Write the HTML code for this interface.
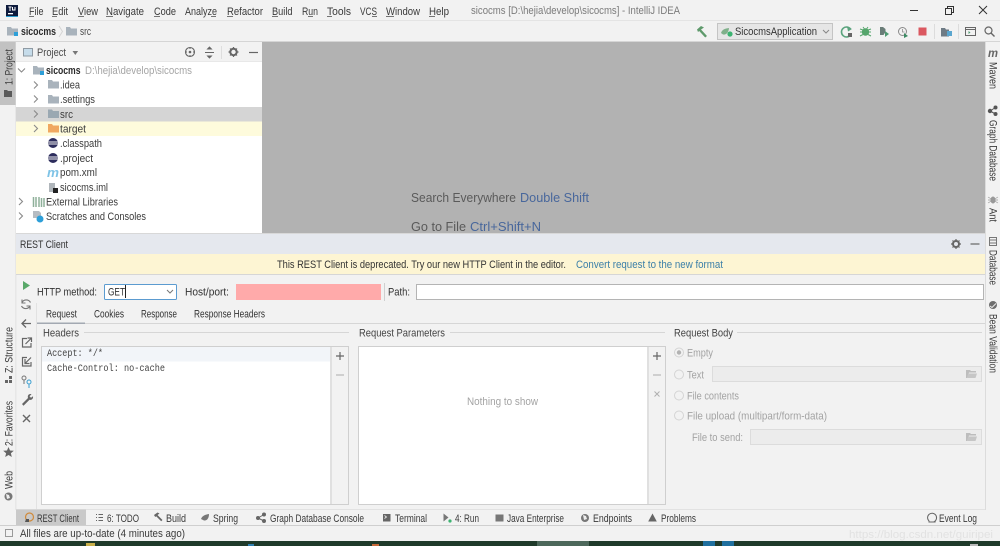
<!DOCTYPE html>
<html><head><meta charset="utf-8"><title>sicocms - IntelliJ IDEA</title>
<style>
html,body{margin:0;padding:0;width:1000px;height:546px;overflow:hidden;background:#f2f2f2}
svg{display:block;font-family:"Liberation Sans",sans-serif;font-size:11px;fill:#3c3c3c;filter:blur(.3px)}
.m{font-family:"Liberation Mono",monospace;font-size:10px;fill:#444}
.g{fill:#a3a3a3}
.b{font-weight:bold;fill:#2a2a2a}
</style></head><body>
<svg width="1000" height="546" viewBox="0 0 1000 546">
<defs>
<g id="fo"><path d="M0 1h4l1 1.500h6v7H0z"/></g>
<g id="arr"><path d="M-2-3.500 1.500 0-2 3.500" fill="none" stroke="#8a8a8a" stroke-width="1.100"/></g>
<g id="ecl"><circle r="5" fill="#2c2c5c"/><path d="M-5-1h10M-5 1h10" stroke="#f2f2f2" stroke-width="1"/></g>
<g id="dfo"><path d="M0 1h4l1 1h5v1.500H3L1 9H0z" fill="#bdbdbd"/><path d="M2.500 4.500H11L9.500 9H1z" fill="#c6c6c6"/></g>
</defs>
<rect width="1000" height="546" fill="#f2f2f2"/>
<!-- title -->
<rect y="20" width="1000" height="1" fill="#e4e4e4"/>
<rect x="6" y="5" width="12" height="12" fill="#0d1a3c"/><rect x="8" y="13" width="5" height="1.300" fill="#fff"/><path d="M8.500 7h3M10 7v4M12.500 7v3h2.500V7" stroke="#fff" stroke-width="1" fill="none"/><rect x="6" y="16" width="12" height="1" fill="#2e9fd0"/>
<g fill="#3a3a3a">
<text x="29" y="15" textLength="14.500" lengthAdjust="spacingAndGlyphs">File</text>
<text x="52" y="15" textLength="16" lengthAdjust="spacingAndGlyphs">Edit</text>
<text x="78" y="15" textLength="20" lengthAdjust="spacingAndGlyphs">View</text>
<text x="106" y="15" textLength="38" lengthAdjust="spacingAndGlyphs">Navigate</text>
<text x="154" y="15" textLength="22" lengthAdjust="spacingAndGlyphs">Code</text>
<text x="185" y="15" textLength="32" lengthAdjust="spacingAndGlyphs">Analyze</text>
<text x="227" y="15" textLength="36" lengthAdjust="spacingAndGlyphs">Refactor</text>
<text x="272" y="15" textLength="20.500" lengthAdjust="spacingAndGlyphs">Build</text>
<text x="302" y="15" textLength="16" lengthAdjust="spacingAndGlyphs">Run</text>
<text x="327" y="15" textLength="24" lengthAdjust="spacingAndGlyphs">Tools</text>
<text x="360" y="15" textLength="17" lengthAdjust="spacingAndGlyphs">VCS</text>
<text x="386" y="15" textLength="34" lengthAdjust="spacingAndGlyphs">Window</text>
<text x="429" y="15" textLength="20" lengthAdjust="spacingAndGlyphs">Help</text>
</g>
<g fill="#555"><rect x="29" y="16" width="5" height=".8"/><rect x="52" y="16" width="5" height=".8"/><rect x="78" y="16" width="6" height=".8"/><rect x="106" y="16" width="7" height=".8"/><rect x="154" y="16" width="6" height=".8"/><rect x="211" y="16" width="5" height=".8"/><rect x="227" y="16" width="6" height=".8"/><rect x="272" y="16" width="6" height=".8"/><rect x="308" y="16" width="5" height=".8"/><rect x="327" y="16" width="5" height=".8"/><rect x="372" y="16" width="5" height=".8"/><rect x="386" y="16" width="8" height=".8"/><rect x="429" y="16" width="6" height=".8"/></g>
<text x="471" y="14" textLength="209" lengthAdjust="spacingAndGlyphs" fill="#7b7b7b">sicocms [D:\hejia\develop\sicocms] - IntelliJ IDEA</text>
<path d="M910 10.500h8" stroke="#333" stroke-width="1"/>
<path d="M945.500 8.500h6v6h-6zM947.500 8.500v-2h6v6h-2" fill="none" stroke="#333" stroke-width="1"/>
<path d="M979 6l8 8M987 6l-8 8" stroke="#333" stroke-width="1"/>
<!-- nav -->
<rect y="41" width="1000" height="1" fill="#d5d5d5"/>
<use href="#fo" x="7" y="26" fill="#a9b3bc"/><rect x="14" y="32" width="4" height="4" fill="#2d9fd8"/>
<text x="21" y="35" textLength="35" lengthAdjust="spacingAndGlyphs" class="b">sicocms</text>
<path d="M59 26l3.500 5.500L59 37" fill="none" stroke="#d4d4d4"/>
<use href="#fo" x="66" y="26" fill="#a9b3bc"/>
<text x="80" y="35" textLength="11" lengthAdjust="spacingAndGlyphs" fill="#4a4a4a">src</text>
<!-- hammer -->
<path d="M697 29.500l4-3.500 3 1.500-3 2 6 6.500-1.800 1.500-6-6.500-1.200 1z" fill="#5f9a6c"/>
<!-- run config combo -->
<rect x="717.500" y="23.500" width="115" height="16" fill="#e6e6e6" stroke="#c4c4c4"/>
<path d="M721 33c1-3.500 4-4.500 8-5-.5 5-3 7-6 6.500z" fill="#7fb08a"/><circle cx="730" cy="34" r="2.600" fill="#3cb371"/>
<text x="735" y="35" textLength="82" lengthAdjust="spacingAndGlyphs" fill="#333">SicocmsApplication</text>
<path d="M823 30l3 3 3-3" fill="none" stroke="#888"/>
<!-- run toolbar -->
<path d="M850.500 29a5 5 0 1 0 0 6" fill="none" stroke="#5aa37d" stroke-width="1.600"/><path d="M847 26.500l5 2.500-4 2.500z" fill="#5aa37d"/><rect x="848" y="33" width="4" height="4" fill="#666"/>
<circle cx="865.500" cy="32" r="3.700" fill="#55a56c"/><path d="M860 29l3 1M871 29l-3 1M860 32h3M871 32h-3M860 36l3-1.500M871 36l-3-1.500M863 27l1.500 2M868 27l-1.500 2" stroke="#55a56c"/>
<path d="M880 27h3l2.500 2v3l-2 3h-3.500z" fill="#6a7d78"/><path d="M885 31l4 3-4 3z" fill="#4f9a72"/>
<circle cx="902.500" cy="31.500" r="4" fill="none" stroke="#8a8a8a" stroke-width="1"/><path d="M902.500 29v3h2" fill="none" stroke="#8a8a8a" stroke-width=".8"/><path d="M904 33l4 3-4 2z" fill="#3b8a63"/>
<rect x="918.500" y="27.500" width="8" height="8" fill="#db5860"/>
<rect x="934" y="24" width="1" height="15" fill="#dcdcdc"/>
<path d="M941 28h4l1 1.500h3v7h-8z" fill="#6e7b85"/><rect x="947" y="31" width="5" height="5" fill="#5aa6cf"/>
<rect x="958" y="24" width="1" height="15" fill="#dcdcdc"/>
<rect x="965.500" y="27.500" width="10" height="8" fill="none" stroke="#666"/><path d="M965 29.500h11" stroke="#666"/><path d="M968.500 31l2 1.500-2 1.500z" fill="#4f9a72"/>
<circle cx="988.500" cy="30.500" r="3.500" fill="none" stroke="#666" stroke-width="1.200"/><path d="M991 33l3.500 3.500" stroke="#666" stroke-width="1.400"/>
<!-- left stripe -->
<rect x="0" y="42" width="16" height="63" fill="#c2c2c2"/>
<rect x="15.500" y="42" width=".8" height="468" fill="#dcdcdc"/>
<text transform="translate(12.500 85) rotate(-90)" textLength="36" lengthAdjust="spacingAndGlyphs" fill="#3a3a3a">1: Project</text>
<path d="M4 90h3l1 1h4v6H4z" fill="#5a5a5a"/>
<text transform="translate(12.500 373) rotate(-90)" textLength="46" lengthAdjust="spacingAndGlyphs" fill="#3a3a3a">Z: Structure</text>
<path d="M5 380h3v3H5zM9 380h3v3H9zM9 376h3v3H9z" fill="#666"/>
<text transform="translate(12.500 446) rotate(-90)" textLength="45" lengthAdjust="spacingAndGlyphs" fill="#3a3a3a">2: Favorites</text>
<path d="M8.500 447l1.500 3.500 3.800.3-2.900 2.500.9 3.700-3.300-2-3.300 2 .9-3.700-2.900-2.500 3.800-.3z" fill="#666"/>
<text transform="translate(12.500 489) rotate(-90)" textLength="18" lengthAdjust="spacingAndGlyphs" fill="#3a3a3a">Web</text>
<circle cx="8.500" cy="496.500" r="4" fill="#777"/><path d="M6 494l3 1 1 3-3 1z" fill="#eee"/>
<!-- right stripe -->
<rect x="985" y="42" width="1" height="468" fill="#dcdcdc"/>
<text x="988" y="57" font-style="italic" font-weight="bold" font-size="12" textLength="10" lengthAdjust="spacingAndGlyphs" fill="#666">m</text>
<text transform="translate(989.500 62) rotate(90)" textLength="27" lengthAdjust="spacingAndGlyphs" fill="#3a3a3a">Maven</text>
<circle cx="990" cy="111" r="2.200" fill="#555"/><circle cx="995.500" cy="107.500" r="2" fill="#555"/><circle cx="995.500" cy="114" r="2" fill="#555"/><path d="M990 111l5.500-3.500M990 111l5.500 3" stroke="#555"/>
<text transform="translate(989.500 120) rotate(90)" textLength="61" lengthAdjust="spacingAndGlyphs" fill="#3a3a3a">Graph Database</text>
<ellipse cx="993" cy="200" rx="2.500" ry="3.500" fill="#999"/><path d="M988 197l10 6M998 197l-10 6M988 200h10" stroke="#999" stroke-width=".7"/>
<text transform="translate(989.500 208) rotate(90)" textLength="14" lengthAdjust="spacingAndGlyphs" fill="#3a3a3a">Ant</text>
<path d="M989.500 237.500h7v8h-7zM989.500 240h7M989.500 243h7" fill="none" stroke="#777"/>
<text transform="translate(989.500 250) rotate(90)" textLength="35" lengthAdjust="spacingAndGlyphs" fill="#3a3a3a">Database</text>
<circle cx="993" cy="305" r="4" fill="#6e6e6e"/><path d="M990 306l2 1.500 4-4" fill="none" stroke="#eee"/>
<text transform="translate(989.500 314) rotate(90)" textLength="59" lengthAdjust="spacingAndGlyphs" fill="#3a3a3a">Bean Validation</text>
<!-- project header -->
<rect x="16" y="42" width="246" height="20" fill="#f2f2f2"/>
<rect x="16" y="61" width="246" height="1" fill="#e8e8e8"/>
<rect x="23.500" y="48.500" width="9" height="7.500" fill="#c6dcea" stroke="#8f9aa3"/>
<text x="37" y="56" textLength="29" lengthAdjust="spacingAndGlyphs" fill="#4a4a4a">Project</text>
<path d="M72.500 51l2.800 4 2.800-4z" fill="#777"/>
<circle cx="190" cy="52" r="4.500" fill="none" stroke="#666" stroke-width="1.100"/><circle cx="190" cy="52" r="1.300" fill="#666"/><path d="M190 47v2M190 55v2M185 52h2M193 52h2" stroke="#666"/>
<path d="M205 52.500h9M209.500 47l-2 2h4zM209.500 58l-2-2h4z" stroke="#666" fill="#666" stroke-width=".9"/>
<rect x="221" y="46" width="1" height="13" fill="#dedede"/>
<circle cx="233.500" cy="52" r="3.200" fill="none" stroke="#666" stroke-width="2"/><path d="M233.500 47v2M233.500 55v2M228.500 52h2M236.500 52h2M230 48.500l1.500 1.500M237 48.500L235.500 50M230 55.500l1.500-1.500M237 55.500L235.500 54" stroke="#666" stroke-width="1.200"/>
<path d="M249 52.500h9" stroke="#666" stroke-width="1.200"/>
<!-- tree -->
<rect x="16" y="62" width="246" height="171" fill="#fff"/>
<rect x="16" y="107" width="246" height="14.500" fill="#d5d5d5"/>
<rect x="16" y="121.500" width="246" height="14.500" fill="#fefbdc"/>
<path d="M18 68.500l3.500 3.500 3.500-3.500" fill="none" stroke="#8a8a8a" stroke-width="1.100"/>
<use href="#fo" x="33" y="65" fill="#a9b3bc"/><rect x="40" y="71" width="4" height="4" fill="#2d9fd8"/>
<text x="46" y="74" textLength="34.500" lengthAdjust="spacingAndGlyphs" class="b">sicocms</text>
<text x="85" y="74" textLength="107" lengthAdjust="spacingAndGlyphs" fill="#a5a5a5">D:\hejia\develop\sicocms</text>
<use href="#arr" x="36" y="85"/><use href="#fo" x="48" y="79" fill="#a9b3bc"/><text x="60" y="88.500" textLength="20" lengthAdjust="spacingAndGlyphs">.idea</text>
<use href="#arr" x="36" y="99"/><use href="#fo" x="48" y="94" fill="#a9b3bc"/><text x="60" y="103" textLength="35" lengthAdjust="spacingAndGlyphs">.settings</text>
<use href="#arr" x="36" y="114"/><use href="#fo" x="48" y="108.500" fill="#9aa8b2"/><text x="60" y="118" textLength="13" lengthAdjust="spacingAndGlyphs">src</text>
<use href="#arr" x="36" y="128.500"/><use href="#fo" x="48" y="123" fill="#f0a860"/><text x="60" y="132.500" textLength="26" lengthAdjust="spacingAndGlyphs">target</text>
<use href="#ecl" x="53" y="143"/><text x="60" y="147" textLength="42" lengthAdjust="spacingAndGlyphs">.classpath</text>
<use href="#ecl" x="53" y="158"/><text x="60" y="162" textLength="33" lengthAdjust="spacingAndGlyphs">.project</text>
<text x="47" y="177" font-style="italic" font-weight="bold" font-size="13" textLength="12" lengthAdjust="spacingAndGlyphs" fill="#7ec3e6">m</text><text x="60" y="176" textLength="37" lengthAdjust="spacingAndGlyphs">pom.xml</text>
<rect x="49" y="183" width="6" height="9" fill="#b0b6bb"/><rect x="53" y="188" width="5" height="5" fill="#222"/><text x="60" y="191" textLength="48" lengthAdjust="spacingAndGlyphs">sicocms.iml</text>
<use href="#arr" x="21" y="201.500"/><path d="M33.500 197v10M36 197v10M39 197v10M41.500 198v9M44 198v9" stroke="#8fb09a" stroke-width="1.500"/><text x="46" y="205.500" textLength="72" lengthAdjust="spacingAndGlyphs">External Libraries</text>
<use href="#arr" x="21" y="216"/><path d="M33 211h6l2 2v5h-8z" fill="#b6bcc2"/><circle cx="40" cy="219" r="3.500" fill="#2d9fd8"/><text x="46" y="220" textLength="100" lengthAdjust="spacingAndGlyphs">Scratches and Consoles</text>
<!-- editor -->
<rect x="262" y="42" width="723" height="192" fill="#b2b2b2"/>
<text x="411" y="202" font-size="13" textLength="105" lengthAdjust="spacingAndGlyphs" fill="#5a5a5a">Search Everywhere</text>
<text x="520" y="202" font-size="13" textLength="69" lengthAdjust="spacingAndGlyphs" fill="#48679c">Double Shift</text>
<text x="411" y="231" font-size="13" textLength="55" lengthAdjust="spacingAndGlyphs" fill="#5a5a5a">Go to File</text>
<text x="470" y="231" font-size="13" textLength="71" lengthAdjust="spacingAndGlyphs" fill="#48679c">Ctrl+Shift+N</text>
<!-- REST header -->
<rect x="16" y="233" width="969" height="1" fill="#d8d8d8"/>
<rect x="16" y="234" width="969" height="20" fill="#e5e8ee"/>
<text x="20" y="248" textLength="48" lengthAdjust="spacingAndGlyphs" fill="#333">REST Client</text>
<circle cx="956" cy="244" r="3" fill="none" stroke="#666" stroke-width="2"/><path d="M956 239v2M956 247v2M951 244h2M959 244h2M952.500 240.500l1.500 1.500M959.500 240.500L958 242M952.500 247.500l1.500-1.500M959.500 247.500L958 246" stroke="#666" stroke-width="1.200"/>
<path d="M970.500 244h9" stroke="#666" stroke-width="1.200"/>
<!-- banner -->
<rect x="16" y="254" width="969" height="20" fill="#fdf5d3"/>
<rect x="16" y="274" width="969" height="1" fill="#d6d6d6"/>
<text x="277" y="268" textLength="289" lengthAdjust="spacingAndGlyphs" fill="#333">This REST Client is deprecated. Try our new HTTP Client in the editor.</text>
<text x="576" y="268" textLength="147" lengthAdjust="spacingAndGlyphs" fill="#3b7fa8">Convert request to the new format</text>
<!-- left tools -->
<path d="M23 281v9l7-4.500z" fill="#59a869"/>
<path d="M30.500 302.500a4.800 4.800 0 0 0-8.500 0M21.500 306a4.800 4.800 0 0 0 8.500 0" fill="none" stroke="#777" stroke-width="1.200"/><path d="M22 299.500v3.500h3.500M30 309.500V306h-3.500" fill="none" stroke="#777" stroke-width="1.100"/>
<path d="M31 323.500H22M26 319.500l-4 4 4 4" fill="none" stroke="#666" stroke-width="1.300"/>
<path d="M27 338.500h-4.500v8.500H31v-4M25.500 344l5.500-5.500M27.500 338h4v4" fill="none" stroke="#666" stroke-width="1.200"/>
<path d="M27 357.500h-4.500v8.500H31v-4M31 357.500L25.500 363M25 359v4.500h4.500" fill="none" stroke="#666" stroke-width="1.200"/>
<circle cx="24" cy="378" r="2" fill="none" stroke="#777"/><path d="M24 380v4" stroke="#777"/><circle cx="29" cy="382" r="2" fill="none" stroke="#3a9fd0"/><path d="M29 384v4" stroke="#3a9fd0"/>
<path d="M22 404l6-6c-.8-2.500 1-4.500 3.500-3.800l-2 2 1.500 1.500 2-1.500c.5 2.500-1.500 4.200-3.500 3.500l-6 6z" fill="#666"/>
<path d="M23 415l7 7M30 415l-7 7" stroke="#666" stroke-width="1.400"/>
<!-- row -->
<text x="37" y="295.500" textLength="60" lengthAdjust="spacingAndGlyphs" fill="#333">HTTP method:</text>
<rect x="104.500" y="284.500" width="72" height="15" rx="1" fill="#fff" stroke="#5b9bd0"/>
<text x="108" y="295.500" textLength="17" lengthAdjust="spacingAndGlyphs" fill="#333">GET</text><rect x="125" y="285" width="1" height="13" fill="#222"/>
<path d="M167 290l3 3 3-3" fill="none" stroke="#777"/>
<text x="185" y="295.500" textLength="44" lengthAdjust="spacingAndGlyphs" fill="#333">Host/port:</text>
<rect x="236" y="284" width="145" height="16" fill="#ffaaaa"/>
<rect x="384" y="283" width="1" height="18" fill="#cfcfcf"/>
<text x="388" y="295.500" textLength="22" lengthAdjust="spacingAndGlyphs" fill="#333">Path:</text>
<rect x="416.500" y="284.500" width="567" height="15" fill="#fff" stroke="#b4b4b4"/>
<!-- tabs -->
<rect x="37" y="323" width="948" height="1" fill="#d6d6d6"/>
<rect x="37" y="322.500" width="48" height="1.500" fill="#a3a9b2"/>
<rect x="36" y="303" width="1" height="207" fill="#e2e2e2"/>
<text x="46" y="317.500" textLength="31" lengthAdjust="spacingAndGlyphs" fill="#333">Request</text>
<text x="94" y="317.500" textLength="30" lengthAdjust="spacingAndGlyphs" fill="#333">Cookies</text>
<text x="141" y="317.500" textLength="36" lengthAdjust="spacingAndGlyphs" fill="#333">Response</text>
<text x="194" y="317.500" textLength="71" lengthAdjust="spacingAndGlyphs" fill="#333">Response Headers</text>
<!-- group titles -->
<text x="43" y="336.500" textLength="36" lengthAdjust="spacingAndGlyphs" fill="#444">Headers</text><rect x="84" y="332" width="265" height="1" fill="#d6d6d6"/>
<text x="359" y="336.500" textLength="86" lengthAdjust="spacingAndGlyphs" fill="#444">Request Parameters</text><rect x="450" y="332" width="215" height="1" fill="#d6d6d6"/>
<text x="674" y="336.500" textLength="59" lengthAdjust="spacingAndGlyphs" fill="#444">Request Body</text><rect x="737" y="332" width="245" height="1" fill="#d6d6d6"/>
<!-- header table -->
<rect x="41.500" y="346.500" width="307" height="158" fill="#f2f2f2" stroke="#cfcfcf"/>
<rect x="42" y="347" width="288" height="157" fill="#fff"/><rect x="330.500" y="347" width="1" height="157" fill="#cfcfcf"/>
<rect x="42" y="347" width="288" height="14.500" fill="#f2f5f9"/>
<text x="47" y="356" class="m" textLength="56" lengthAdjust="spacingAndGlyphs">Accept: */*</text>
<text x="47" y="371" class="m" textLength="118" lengthAdjust="spacingAndGlyphs">Cache-Control: no-cache</text>
<path d="M340 352v8M336 356h8" stroke="#666" stroke-width="1.200"/><path d="M336 375h8" stroke="#b8b8b8" stroke-width="1.200"/>
<!-- params table -->
<rect x="358.500" y="346.500" width="307" height="158" fill="#f2f2f2" stroke="#cfcfcf"/>
<rect x="359" y="347" width="288" height="157" fill="#fff"/><rect x="647.500" y="347" width="1" height="157" fill="#cfcfcf"/>
<text x="467" y="405" textLength="71" lengthAdjust="spacingAndGlyphs" fill="#a3a3a3">Nothing to show</text>
<path d="M657 352v8M653 356h8" stroke="#666" stroke-width="1.200"/><path d="M653 375h8" stroke="#b8b8b8" stroke-width="1.200"/><path d="M654.500 391.500l5 5M659.500 391.500l-5 5" stroke="#b0b0b0" stroke-width="1"/>
<!-- body -->
<g fill="#f2f2f2" stroke="#d4d4d4"><circle cx="679" cy="352.500" r="4.500"/><circle cx="679" cy="374.500" r="4.500"/><circle cx="679" cy="395.500" r="4.500"/><circle cx="679" cy="415.500" r="4.500"/></g>
<circle cx="679" cy="352.500" r="2.200" fill="#b2b2b2"/>
<text x="687" y="356.500" textLength="26" lengthAdjust="spacingAndGlyphs" class="g">Empty</text>
<text x="687" y="378.500" textLength="17" lengthAdjust="spacingAndGlyphs" class="g">Text</text>
<text x="687" y="399.500" textLength="52" lengthAdjust="spacingAndGlyphs" class="g">File contents</text>
<text x="687" y="419.500" textLength="140" lengthAdjust="spacingAndGlyphs" class="g">File upload (multipart/form-data)</text>
<text x="692" y="441" textLength="51" lengthAdjust="spacingAndGlyphs" class="g">File to send:</text>
<rect x="712.500" y="366.500" width="269" height="15" fill="#ececec" stroke="#dcdcdc"/>
<rect x="750.500" y="429.500" width="231" height="15" fill="#ececec" stroke="#dcdcdc"/>
<use href="#dfo" x="966" y="369"/><use href="#dfo" x="966" y="432"/>
<!-- tool bar -->
<rect x="16" y="509" width="969" height="1" fill="#e2e2e2"/>
<rect x="0" y="525" width="1000" height="1" fill="#cfcfcf"/>
<rect x="16" y="509.500" width="70" height="15.500" fill="#c9c9c9"/>
<circle cx="29.500" cy="517" r="4" fill="none" stroke="#d08a3a" stroke-width="1.200"/><path d="M25 522h4v-3h-3z" fill="#555"/>
<g fill="#3a3a3a">
<text x="37" y="522" textLength="42" lengthAdjust="spacingAndGlyphs">REST Client</text>
<text x="107" y="522" textLength="32" lengthAdjust="spacingAndGlyphs">6: TODO</text>
<text x="166" y="522" textLength="20" lengthAdjust="spacingAndGlyphs">Build</text>
<text x="213" y="522" textLength="25" lengthAdjust="spacingAndGlyphs">Spring</text>
<text x="270" y="522" textLength="94" lengthAdjust="spacingAndGlyphs">Graph Database Console</text>
<text x="395" y="522" textLength="32" lengthAdjust="spacingAndGlyphs">Terminal</text>
<text x="455" y="522" textLength="24" lengthAdjust="spacingAndGlyphs">4: Run</text>
<text x="507" y="522" textLength="57" lengthAdjust="spacingAndGlyphs">Java Enterprise</text>
<text x="593" y="522" textLength="39" lengthAdjust="spacingAndGlyphs">Endpoints</text>
<text x="661" y="522" textLength="35" lengthAdjust="spacingAndGlyphs">Problems</text>
<text x="939" y="522" textLength="38" lengthAdjust="spacingAndGlyphs">Event Log</text>
</g>
<path d="M96 514.500h1M96 517.500h1M96 520.500h1M98.500 514.500h4.500M98.500 517.500h4.500M98.500 520.500h4.500" stroke="#666"/>
<path d="M154 515l3.500-2.500 2 1-2 1.500 5 5-1.300 1.200-5-5-1 .8z" fill="#666"/>
<path d="M201 519c1-3 4-4.500 8-5 0 4-2 7-5 6.500z" fill="#777"/>
<circle cx="258" cy="518" r="2" fill="#666"/><circle cx="264" cy="514.500" r="2" fill="#666"/><circle cx="264" cy="521" r="2" fill="#666"/><path d="M258 518l6-3.500M258 518l6 3" stroke="#666"/>
<rect x="383" y="514" width="7.500" height="7.500" fill="#666"/><path d="M384.500 515.500l2 1.500-2 1.500" stroke="#eee" fill="none" stroke-width=".8"/>
<path d="M443.500 513.500v8l5-4z" fill="#777"/><circle cx="450" cy="521" r="1.600" fill="#3cb371"/>
<rect x="495.500" y="514.500" width="8" height="7" fill="#777"/>
<circle cx="585" cy="518" r="4" fill="#777"/><path d="M583 515l3 1 1 3-3 1z" fill="#eee"/>
<path d="M652.500 513.500l4.300 8h-8.600z" fill="#666"/>
<path d="M929 521a4.500 4.500 0 1 1 5.500 .5l1 .5H929z" fill="none" stroke="#666"/>
<!-- status -->
<rect x="5.500" y="529.500" width="7" height="7" fill="none" stroke="#9a9a9a"/>
<text x="20" y="537" textLength="165" lengthAdjust="spacingAndGlyphs" fill="#3a3a3a">All files are up-to-date (4 minutes ago)</text>
<text x="849" y="538" font-size="11" textLength="144" lengthAdjust="spacingAndGlyphs" fill="#e2e2e2">https://blog.csdn.net/guiripei</text>
<!-- taskbar -->
<rect y="541" width="1000" height="5" fill="#1f3a2a"/>
<rect x="537" y="541" width="52" height="5" fill="#4d685b"/>
<rect x="703" y="541" width="12" height="5" fill="#1f6f9e"/><rect x="722" y="541" width="12" height="5" fill="#1f6f9e"/>
<rect x="86" y="543" width="9" height="3" fill="#c9b04a"/><rect x="248" y="544" width="6" height="2" fill="#2f7fb0"/><rect x="372" y="544" width="7" height="2" fill="#c76a3a"/><rect x="970" y="544" width="8" height="2" fill="#bbb"/>
</svg>
</body></html>
